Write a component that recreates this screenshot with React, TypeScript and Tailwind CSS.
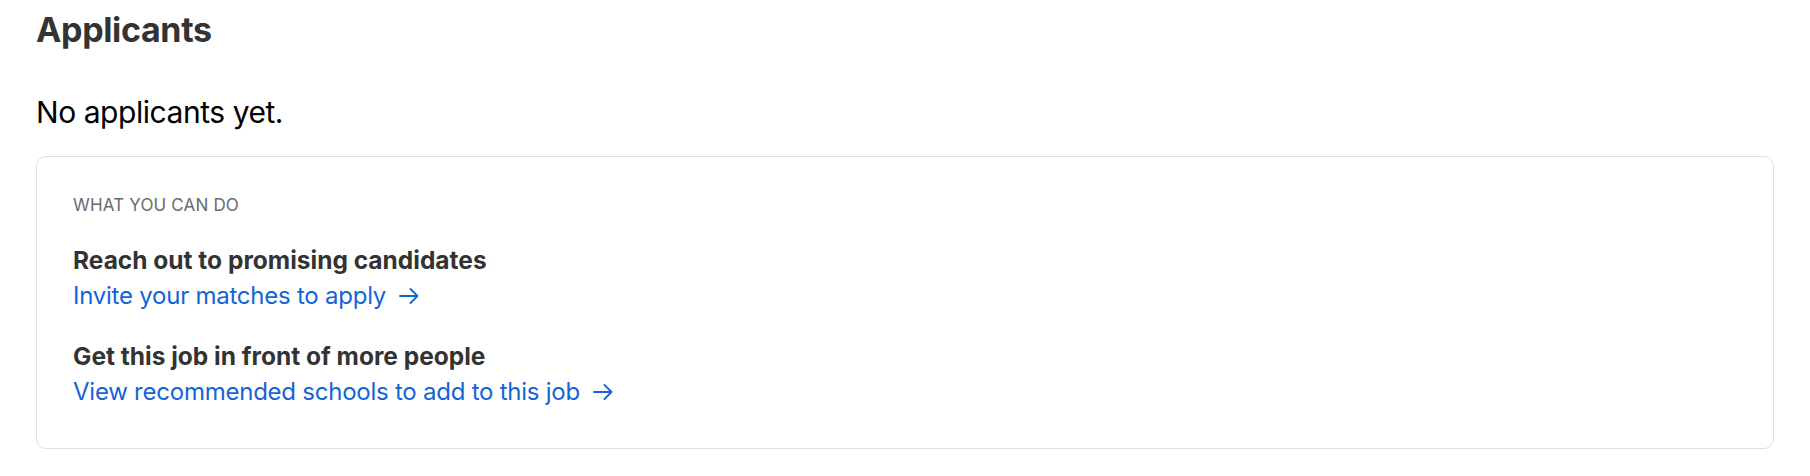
const font = { fontFamily: "Inter, 'Liberation Sans', sans-serif" };

function Arrow() {
  return (
    <svg width="20" height="16" viewBox="0 0 20 16" fill="none" className="ml-[13px] shrink-0">
      <path d="M1 8h17.5M11.5 1l7 7-7 7" stroke="currentColor" strokeWidth="1.8" strokeLinecap="round" strokeLinejoin="round" />
    </svg>
  );
}

const actions = [
  { title: "Reach out to promising candidates", link: "Invite your matches to apply" },
  { title: "Get this job in front of more people", link: "View recommended schools to add to this job" },
];

export default function App() {
  return (
    <div className="min-h-screen bg-white px-9 pt-[10px]" style={font}>
      <h2 className="text-[34px] leading-10 font-bold text-[#333333] tracking-[-0.01em]">Applicants</h2>
      <p className="mt-[44px] text-[30px] leading-9 text-black tracking-[-0.015em]">No applicants yet.</p>

      <div className="mt-[26px] rounded-[10px] border border-[#e0e0e0] px-9 pt-9 pb-[38px]">
        <div className="text-[17px] leading-6 uppercase text-[#6b6b6b] tracking-[0.01em]">What you can do</div>

        <div className="mt-[25px] flex flex-col gap-[24px]">
          {actions.map((a) => (
            <div key={a.title}>
              <div className="text-[24.5px] leading-9 font-bold text-[#333333]">{a.title}</div>
              <a href="#" className="inline-flex items-center text-[24px] leading-9 text-[#1464d8] tracking-[-0.01em]">
                {a.link}
                <Arrow />
              </a>
            </div>
          ))}
        </div>
      </div>
    </div>
  );
}
